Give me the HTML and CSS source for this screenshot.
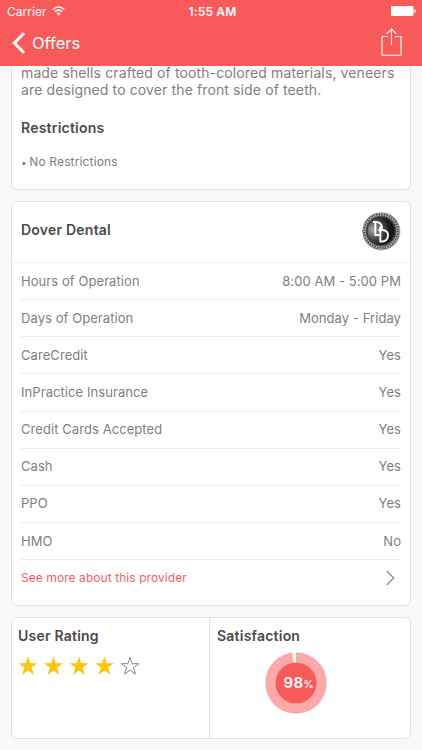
FILE: index.html
```
<!doctype html>
<html lang="en">

<head>
<meta charset="utf-8">
<meta name="viewport" content="width=device-width, initial-scale=1.0">
<title>Offers</title>
<link rel="stylesheet" href="styles.css">
</head>

<body>
	<header class="topbar">
		<div class="status">
			<div class="carrier">Carrier
				<svg width="13" height="10" viewBox="0 0 13 10" fill="none" stroke="#fff" stroke-width="1.5">
					<path d="M.7 3.5Q6.5-1.6 12.3 3.5M2.8 5.8Q6.5 2.5 10.2 5.8"/>
					<path d="M4.4 7.4Q6.5 5.5 8.6 7.4L6.5 9.5z" fill="#fff" stroke="none"/>
				</svg>
			</div>
			<div class="clock">1:55 AM</div>
			<svg class="battery" width="25" height="10" viewBox="0 0 25 10" fill="#fff">
				<rect width="22.5" height="10" rx="1"/>
				<path d="M23.3 3.2Q24.8 3.5 24.8 5T23.3 6.8z"/>
			</svg>
		</div>
		<div class="nav">
			<a class="back" href="#">
				<svg width="14" height="22" viewBox="0 0 14 22" fill="none" stroke="#fff" stroke-width="3">
					<path d="M12 1.2L2.3 11 12 20.8"/>
				</svg>
				<span>Offers</span>
			</a>
			<svg class="share" width="21" height="28" viewBox="0 0 21 28" fill="none" stroke="#fff" stroke-width="1.1">
				<path d="M6.8 8.5H1V27.3H20V8.5H14.2M10.5 17V1M5.7 5.9L10.5 1 15.3 5.9"/>
			</svg>
		</div>
	</header>

	<main>
		<section class="card offer">
			<p class="desc">made shells crafted of tooth-colored materials, veneers<br>are designed to cover the front side of teeth.</p>
			<h2>Restrictions</h2>
			<p class="note"><span class="dot">•</span> No Restrictions</p>
		</section>

		<section class="card provider">
			<div class="providerhead">
				<h2>Dover Dental</h2>
				<svg class="logo" width="40" height="40" viewBox="0 0 40 40">
					<defs>
						<radialGradient id="coin" cx=".22" cy=".45" r=".75">
							<stop offset="0" stop-color="#aaa"/>
							<stop offset=".4" stop-color="#555"/>
							<stop offset=".8" stop-color="#161616"/>
						</radialGradient>
					</defs>
					<circle cx="20.4" cy="20.4" r="19" fill="#aaa"/>
					<circle cx="20" cy="20" r="18.3" fill="#555"/>
					<circle cx="20" cy="20" r="16.6" fill="none" stroke="#bbb" stroke-width="2.2"/>
					<circle cx="20" cy="20" r="16.6" fill="none" stroke="#333" stroke-width="1.5" stroke-dasharray="1.3 1.3"/>
					<circle cx="20" cy="20" r="14" fill="url(#coin)" stroke="#333" stroke-width="1"/>
					<g fill="none" stroke="#fff" stroke-width="2">
						<path d="M12 11H15.5C20 11.3 21.5 15 20.5 18.5M14.3 11V24H18"/>
						<path d="M17.5 19H21.5C26 19.3 27.7 22 26.8 26Q25.7 30 21.5 30.5H19.3V15.5"/>
					</g>
				</svg>
			</div>
			<div class="rows">
				<div class="row"><span>Hours of Operation</span><span>8:00 AM - 5:00 PM</span></div>
				<div class="row"><span>Days of Operation</span><span>Monday - Friday</span></div>
				<div class="row"><span>CareCredit</span><span>Yes</span></div>
				<div class="row"><span>InPractice Insurance</span><span>Yes</span></div>
				<div class="row"><span>Credit Cards Accepted</span><span>Yes</span></div>
				<div class="row"><span>Cash</span><span>Yes</span></div>
				<div class="row"><span>PPO</span><span>Yes</span></div>
				<div class="row"><span>HMO</span><span>No</span></div>
				<a class="row more" href="#">
					<span>See more about this provider</span>
					<svg width="9" height="16" viewBox="0 0 9 16" fill="none" stroke="#888" stroke-width="1.2">
						<path d="M.8 1L7.8 8 .8 15"/>
					</svg>
				</a>
			</div>
		</section>

		<section class="card scores">
			<div class="score">
				<h2>User Rating</h2>
				<svg class="stars" width="124" height="20" viewBox="0 0 124 20">
					<defs>
						<path id="star" d="M10 .3L12.2 7.2H19.5L13.6 11.5 15.9 18.8 10 14.5 4.1 18.8 6.4 11.5.5 7.2H7.8z"/>
					</defs>
					<g fill="#ffc40c">
						<use href="#star"/>
						<use href="#star" x="25.5"/>
						<use href="#star" x="51"/>
						<use href="#star" x="76.5"/>
					</g>
					<path d="M112 1.3L114.1 7.7H120.8L115.4 11.6 117.4 18 112 14.1 106.6 18 108.6 11.6 103.2 7.7H109.9z" fill="#fff" stroke="#777" stroke-width=".9"/>
				</svg>
			</div>
			<div class="score">
				<h2>Satisfaction</h2>
				<svg class="donut" width="62" height="62" viewBox="0 0 62 62">
					<circle cx="31" cy="31" r="30.7" fill="#fba9a9"/>
					<path d="M31 31V0H27.2z" fill="#fff"/>
					<circle cx="31" cy="31" r="20.5" fill="#f85a5a"/>
					<text class="pct" x="18.5" y="35.5">98</text>
					<text class="sign" x="38.6" y="35.5">%</text>
				</svg>
			</div>
		</section>
	</main>
</body>
</html>
```
FILE: styles.css
```
* {
	box-sizing: border-box;
}

body, html {
	margin: 0;
	height: 750px;
	overflow: hidden;
}

body {
	background: #f9f9f9;
	font-family: Inter, "Liberation Sans", sans-serif;
	color: #808080;
}

a {
	color: inherit;
	text-decoration: none;
}

svg {
	display: block;
	flex: none;
}

h2 {
	margin: 0;
	font-size: 14px;
	font-weight: 600;
	line-height: 18px;
	letter-spacing: .22px;
	color: #4a4a4a;
}

p {
	margin: 0;
}

/* top bar */
.topbar {
	height: 66px;
	background: #f85a5a;
	color: #fff;
}
.status {
	display: grid;
	grid-template-columns: 1fr auto 1fr;
	align-items: center;
	height: 22px;
	padding: 0 6px 0 7px;
	font-size: 12px;
}
.carrier {
	display: flex;
	align-items: center;
	gap: 5px;
	letter-spacing: .05px;
}
.clock {
	padding-left: 2px;
	font-weight: 600;
	letter-spacing: .15px;
}
.battery {
	justify-self: end;
}
.nav {
	display: flex;
	justify-content: space-between;
	height: 44px;
	padding: 6px 20px 0 12px;
}
.back {
	display: flex;
	align-items: center;
	gap: 6px;
	height: 30px;
	font-size: 16.5px;
}

/* cards */
main {
	padding: 0 11px;
}
.card {
	margin-bottom: 11px;
	background: #fff;
	border: 1px solid #e1e1e1;
	border-radius: 6px;
}
.offer {
	display: flow-root;
	height: 124px;
	padding: 0 9px;
	border-top: 0;
	border-radius: 0 0 6px 6px;
}
.desc {
	margin: -2px 0 21px;
	font-size: 14px;
	line-height: 17px;
	letter-spacing: .12px;
	white-space: nowrap;
}
.note {
	margin-top: 17px;
	font-size: 12px;
	line-height: 16px;
	letter-spacing: .14px;
}
.dot {
	margin-right: -1px;
	font-size: 10px;
}

.provider {
	height: 405px;
}
.providerhead {
	display: flex;
	align-items: center;
	justify-content: space-between;
	height: 61px;
	padding: 0 9px 4px;
	border-bottom: 1px solid #eee;
}
.logo {
	margin-top: 2px;
}
.rows {
	padding: 0 9px;
}
.row {
	display: flex;
	align-items: center;
	justify-content: space-between;
	height: 37.15px;
	padding-bottom: 1px;
	border-bottom: 1px solid #ececec;
	font-size: 13px;
	letter-spacing: .07px;
}
.more {
	padding-right: 6px;
	padding-bottom: 2px;
	border: 0;
	font-size: 12px;
	color: #f15f63;
}

.scores {
	display: flex;
	height: 122px;
}
.score {
	flex: 1;
	padding: 9px 7px;
}
.score:first-child {
	flex: 0 0 197px;
	padding-left: 6px;
}
.score + .score {
	border-left: 1px solid #e1e1e1;
}
.stars {
	margin-top: 11px;
}
.donut {
	margin: 7px 0 0 48px;
}
.pct {
	fill: #fff;
	font-size: 15px;
	font-weight: 600;
	letter-spacing: .3px;
}
.sign {
	fill: #fff;
	font-size: 10px;
	font-weight: 600;
}
```
